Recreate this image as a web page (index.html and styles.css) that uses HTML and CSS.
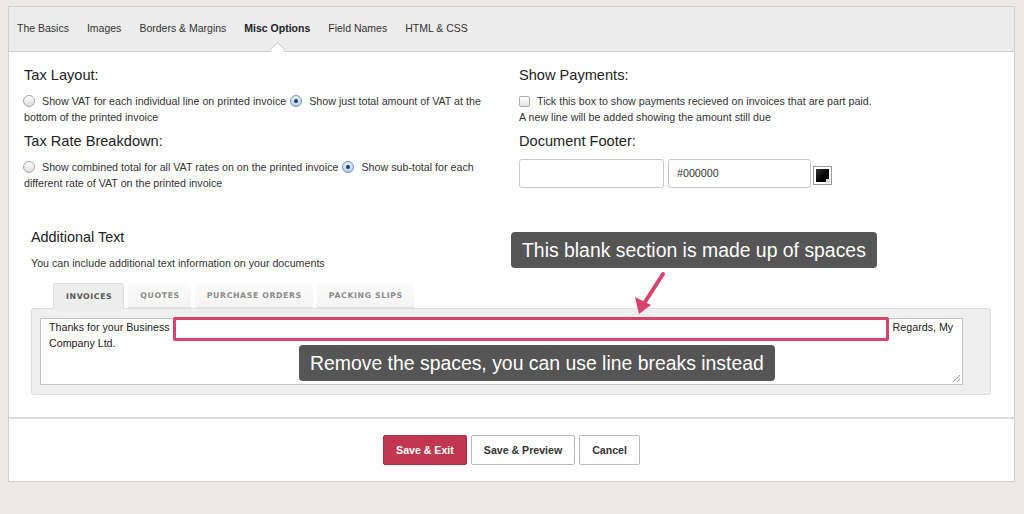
FILE: index.html
```html
<!DOCTYPE html>
<html>
<head>
<meta charset="utf-8">
<title>Misc Options</title>
<link rel="stylesheet" href="styles.css">
</head>
<body>
<div class="panel">
  <nav class="tabbar">
    <span class="tab">The Basics</span>
    <span class="tab">Images</span>
    <span class="tab">Borders &amp; Margins</span>
    <span class="tab active">Misc Options</span>
    <span class="tab">Field Names</span>
    <span class="tab">HTML &amp; CSS</span>
  </nav>
  <div class="content">
    <div class="cols">
      <div class="col">
        <h3 class="heading">Tax Layout:</h3>
        <p class="opt"><span class="radio"></span>Show VAT for each individual line on printed invoice<span class="radio on second"></span>Show just total amount of VAT at the bottom of the printed invoice</p>
        <h3 class="heading">Tax Rate Breakdown:</h3>
        <p class="opt"><span class="radio"></span>Show combined total for all VAT rates on on the printed invoice<span class="radio on second"></span>Show sub-total for each different rate of VAT on the printed invoice</p>
      </div>
      <div class="col">
        <h3 class="heading">Show Payments:</h3>
        <p class="opt"><span class="check"></span>Tick this box to show payments recieved on invoices that are part paid.<br>A new line will be added showing the amount still due</p>
        <h3 class="heading">Document Footer:</h3>
        <div class="footer-row">
          <div class="input"></div>
          <div class="input">#000000</div>
          <div class="swatch"><span class="swatch-fill"></span><span class="swatch-arrow"></span></div>
        </div>
      </div>
    </div>
    <section class="additional">
      <h3 class="subheading">Additional Text</h3>
      <p class="hint">You can include additional text information on your documents</p>
      <div class="doctabs">
        <span class="doctab active">Invoices</span>
        <span class="doctab">Quotes</span>
        <span class="doctab">Purchase Orders</span>
        <span class="doctab">Packing Slips</span>
      </div>
      <div class="docpanel">
        <div class="textarea"><span class="line1">Thanks for your Business<span class="blank"></span>Regards, My</span><br>Company Ltd.<span class="grip"></span></div>
      </div>
      <div class="tip tip-top">This blank section is made up of spaces</div>
      <svg class="arrow" width="44" height="48" viewBox="0 0 44 48">
        <line x1="33" y1="4" x2="15" y2="32" stroke="#d9426f" stroke-width="4" stroke-linecap="round"/>
        <polygon points="9,44 5,27 21,35" fill="#d9426f"/>
      </svg>
      <div class="tip tip-bottom">Remove the spaces, you can use line breaks instead</div>
    </section>
  </div>
  <div class="actions">
    <button class="btn primary">Save &amp; Exit</button>
    <button class="btn">Save &amp; Preview</button>
    <button class="btn">Cancel</button>
  </div>
</div>
</body>
</html>
```

FILE: styles.css
```css
* { box-sizing: border-box; }
html, body { margin: 0; padding: 0; }
body {
  background: #ebeae5;
  font-family: "Liberation Sans", Helvetica, Arial, sans-serif;
  color: #333;
  padding: 6px 9px 0 8px;
  height: 514px;
  overflow: hidden;
}
.panel {
  position: relative;
  background: #fff;
  border: 1px solid #cfcfcb;
}
.tabbar {
  height: 45px;
  background: #ececec;
  border-bottom: 1px solid #cccccc;
  display: flex;
  align-items: center;
  gap: 18px;
  padding: 0 0 2px 8px;
  font-size: 10.5px;
  color: #333;
}
.tab { position: relative; line-height: 14px; }
.tab.active { font-weight: bold; color: #222; }
.tab.active::after {
  content: "";
  position: absolute;
  left: 50%;
  bottom: -20px;
  width: 10px;
  height: 10px;
  margin-left: -5px;
  background: #fff;
  border-top: 1px solid #cccccc;
  border-left: 1px solid #cccccc;
  transform: rotate(45deg);
}
.content { padding: 13px 15px 0 15px; }
.cols {
  display: grid;
  grid-template-columns: 1fr 1fr;
  column-gap: 15px;
}
.heading {
  margin: 0 0 8px 0;
  font-size: 14.6px;
  font-weight: normal;
  line-height: 20px;
  color: #222;
}
.opt {
  margin: 0 0 6px 0;
  font-size: 10.7px;
  line-height: 16px;
  color: #333;
}
.radio {
  display: inline-block;
  width: 12px;
  height: 12px;
  border-radius: 50%;
  border: 1px solid #a9a9a9;
  background: linear-gradient(#ffffff, #dcdcdc);
  vertical-align: -2px;
  margin: 0 7px 0 -1px;
  position: relative;
}
.radio.second { margin-left: 4px; }
.radio.on {
  border-color: #6f8fbf;
  background: linear-gradient(#e9f1fb, #b9cde8);
}
.radio.on::after {
  content: "";
  position: absolute;
  left: 3px;
  top: 3px;
  width: 4px;
  height: 4px;
  border-radius: 50%;
  background: #1f3f6e;
}
.check {
  display: inline-block;
  width: 11px;
  height: 11px;
  border: 1px solid #aaaaaa;
  border-radius: 2px;
  background: linear-gradient(#ffffff, #e2e2e2);
  vertical-align: -2px;
  margin: 0 7px 0 0;
}
.footer-row {
  display: flex;
  align-items: center;
  gap: 4px;
}
.input {
  width: 145px;
  height: 29px;
  border: 1px solid #c8c8c8;
  border-radius: 3px;
  font-size: 10.7px;
  line-height: 27px;
  padding: 0 8px;
  color: #333;
}
.input + .input { width: 143px; }
.swatch {
  position: relative;
  width: 19px;
  height: 19px;
  border: 1px solid #999;
  background: #fff;
  padding: 2px;
  margin-left: -2px;
  margin-top: 4px;
}
.swatch-fill {
  display: block;
  width: 13px;
  height: 13px;
  background: linear-gradient(135deg, #333 0%, #000 60%);
}
.swatch-arrow {
  position: absolute;
  right: 1px;
  bottom: 1px;
  width: 4px;
  height: 4px;
  background: #ddd;
}
.additional {
  position: relative;
  margin: 30px 8px 0 7px;
}
.subheading {
  margin: 0 0 8px 0;
  font-size: 14.4px;
  font-weight: normal;
  line-height: 20px;
  color: #222;
}
.hint {
  margin: 0 0 12px 0;
  font-size: 10.7px;
  line-height: 16px;
}
.doctabs {
  display: flex;
  gap: 4px;
  padding-left: 22px;
  height: 25px;
}
.doctab {
  display: block;
  height: 25px;
  padding: 0 11px 0 12px;
  font-family: "DejaVu Sans", Verdana, sans-serif;
  font-weight: bold;
  font-size: 7.8px;
  letter-spacing: 0.6px;
  text-transform: uppercase;
  line-height: 25px;
  color: #8a8a8a;
  background: linear-gradient(#fbfbfb, #f4f4f4);
  border-radius: 3px 3px 0 0;
  border-bottom: 1px solid #e2e2e2;
}
.doctab.active {
  color: #555;
  background: #ededed;
  border: 1px solid #dddddd;
  border-bottom: none;
  height: 26px;
  margin-bottom: -1px;
  position: relative;
  z-index: 1;
}
.docpanel {
  background: #eeeeee;
  border: 1px solid #dddddd;
  border-radius: 3px;
  padding: 9px 27px 9px 8px;
}
.textarea {
  position: relative;
  width: 923px;
  height: 67px;
  background: #fff;
  border: 1px solid #c4c4c4;
  padding: 0 4px 0 8px;
  font-size: 10.7px;
  line-height: 16px;
  color: #222;
}
.line1 { white-space: nowrap; }
.blank {
  display: inline-block;
  vertical-align: top;
  width: 716px;
  height: 24px;
  margin: -2px 4px -6px 3px;
  border: 3px solid #d9426f;
  border-radius: 2px;
  background: #fff;
}
.grip {
  position: absolute;
  right: 2px;
  bottom: 2px;
  width: 7px;
  height: 7px;
  background: linear-gradient(135deg, transparent 45%, #999 45%, #999 55%, transparent 55%, transparent 72%, #999 72%, #999 82%, transparent 82%);
}
.tip {
  position: absolute;
  height: 36px;
  line-height: 36px;
  padding: 0 11px;
  background: #555555;
  color: #fff;
  font-size: 19.4px;
  border-radius: 4px;
  white-space: nowrap;
}
.tip-top { left: 480px; top: 5px; }
.tip-bottom { left: 268px; top: 118px; }
.arrow {
  position: absolute;
  left: 599px;
  top: 43px;
}
.actions {
  margin-top: 22px;
  border-top: 2px solid #dcdcdc;
  padding: 16px 0 16px 0;
  display: flex;
  justify-content: center;
  gap: 4px;
}
.btn {
  height: 30px;
  padding: 0 12px;
  font-family: "Liberation Sans", Helvetica, Arial, sans-serif;
  font-size: 10.6px;
  font-weight: bold;
  color: #333;
  background: #fff;
  border: 1px solid #b9b9b9;
  border-radius: 2px;
}
.btn.primary {
  background: #c0384f;
  border-color: #a82c42;
  color: #fff;
}
```
